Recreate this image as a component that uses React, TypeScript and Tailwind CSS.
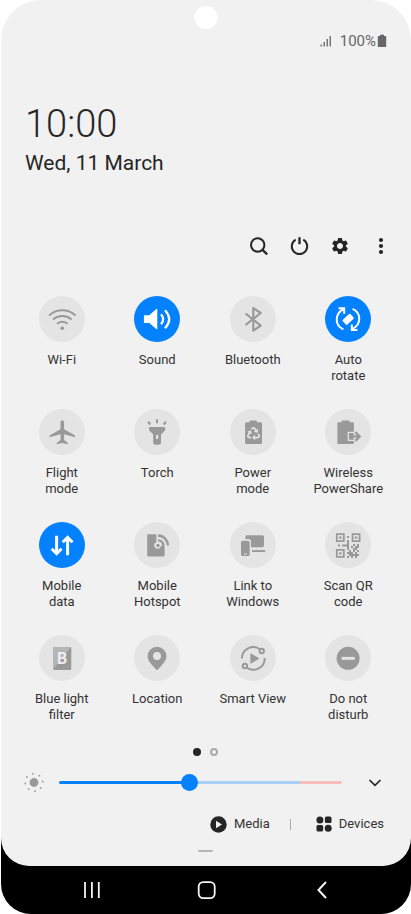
import { useState, type ReactNode } from "react";
import { FaRecycle } from "react-icons/fa";
import { MdSettings } from "react-icons/md";

const LIGHT = "#e4e4e4";

function Glyph({ children }: { children: ReactNode }) {
  return (
    <svg viewBox="0 0 46 46" className="size-full" fill="none" aria-hidden="true">
      {children}
    </svg>
  );
}

const icons: Record<string, ReactNode> = {
  wifi: (
    <Glyph>
      <g stroke="currentColor" strokeWidth="2" strokeLinecap="round">
        <path d="M10.7 19a19.4 19.4 0 0 1 25.2 0" />
        <path d="M14.6 23a14 14 0 0 1 17.4 0" />
        <path d="M18.7 27.3a8 8 0 0 1 9.2 0" />
      </g>
      <circle cx="23.3" cy="32.3" r="1.8" fill="currentColor" />
    </Glyph>
  ),
  sound: (
    <Glyph>
      <path d="M10.6 19.2h4.7l7-6.1q1-.6 1 .4v19.2q0 1-1 .4l-7-6.1h-4.7q-.7 0-.7-.7v-6.4q0-.7.7-.7z" fill="currentColor" />
      <path d="M27 18.2q4.4 5 0 10M31 14.3q8.5 9 0 18" stroke="currentColor" strokeWidth="2.2" />
    </Glyph>
  ),
  bluetooth: (
    <Glyph>
      <path d="M15.5 17.5 30.7 29.6 23.3 34.6V12l7.4 5-15.2 12" stroke="currentColor" strokeWidth="2.2" strokeLinejoin="round" />
    </Glyph>
  ),
  rotate: (
    <Glyph>
      <path d="M18.4 33.4C9.8 29.5 9.2 18.5 18.3 13.2M13.6 12.2h5.6v5.6" stroke="currentColor" strokeWidth="2" />
      <path d="M27.6 12.8c8.600 3.900 9.200 14.900.1 20.200M32.400 34h-5.600v-5.600" stroke="currentColor" strokeWidth="2" />
      <rect x="18" y="20" width="10.400" height="6.600" rx="1" fill="currentColor" transform="rotate(-43 23.200 23.300)" />
    </Glyph>
  ),
  flight: (
    <Glyph>
      <path d="M23.300 11.300c1.200 0 1.800 1.200 1.800 2.700v6.200l10.200 5.800q.7.400.7 1.200v1l-10.900-2.900v5.700l3.300 2.500q.5.400.5 1v.8l-5.600-1.200-5.600 1.200v-.8q0-.6.500-1l3.300-2.500v-5.700l-10.900 2.900v-1q0-.8.7-1.200l10.200-5.800V14c0-1.500.6-2.700 1.800-2.700z" fill="currentColor" />
    </Glyph>
  ),
  torch: (
    <Glyph>
      <path d="M23 10.2v4M14 12.700l2.300 2.800M32 12.700l-2.300 2.800" stroke="currentColor" strokeWidth="2" />
      <path fillRule="evenodd" d="M16 18h14.200q1.100 0 1.100 1v1.200q0 .7-.5 1.200L27 25.600v8q0 2.100-2.100 2.100h-3.600q-2.100 0-2.100-2.100v-8l-3.700-4.200q-.5-.5-.5-1.200V19q0-1 1-1zM22 26v4h2.200v-4z" fill="currentColor" />
    </Glyph>
  ),
  power: (
    <Glyph>
      <path d="M19.700 13.300V12q0-.4.500-.4h6.200q.5 0 .5.4v1.300h3.900q1.200 0 1.200 1.200v19.300q0 1.200-1.200 1.200H16.300q-1.200 0-1.200-1.200V14.500q0-1.200 1.200-1.200z" fill="currentColor" />
      <FaRecycle x="17" y="18" size={13} color={LIGHT} />
    </Glyph>
  ),
  share: (
    <Glyph>
      <path d="M16.500 13.300V12q0-.4.500-.4h7.200q.5 0 .5.4v1.300h3q1.200 0 1.200 1.200v19.300q0 1.200-1.200 1.200H13.600q-1.200 0-1.200-1.200V14.500q0-1.200 1.200-1.200z" fill="currentColor" />
      <path d="M29 23.400h-5.700v8H29" stroke={LIGHT} strokeWidth="1.300" />
      <path d="M28.700 22.800h1v9.200h-1z" fill={LIGHT} />
      <path d="M24.500 27.400h10M30.300 23l4.400 4.400-4.400 4.400" stroke="currentColor" strokeWidth="2.400" />
    </Glyph>
  ),
  data: (
    <Glyph>
      <path d="M17.600 13.800v17.800M12.700 26.800l4.900 4.900 4.900-4.900M28.600 33.200V15.400M23.700 20.300l4.900-4.900 4.900 4.900" stroke="currentColor" strokeWidth="3" />
    </Glyph>
  ),
  hotspot: (
    <Glyph>
      <rect x="13.200" y="12.200" width="17.400" height="22.400" rx="1.300" fill="currentColor" />
      <path d="M22.400 12h8.300v11.600H27a3.400 3.400 0 1 1-4.600-3.400z" fill={LIGHT} />
      <circle cx="24" cy="23.500" r="1.700" fill="currentColor" />
      <path d="M24 18.300a5.400 5.400 0 0 1 5.300 5.400M24 13.500a10 10 0 0 1 9.900 10" stroke="currentColor" strokeWidth="2.300" />
    </Glyph>
  ),
  link: (
    <Glyph>
      <path d="M15.400 17v-2q0-1.800 1.800-1.800h15q1.800 0 1.800 1.800v8.500q0 1.800-1.800 1.800H21v-5.800q0-2.500-2.500-2.500z" fill="currentColor" />
      <path d="M22 28.100h13.100V30H22z" fill="currentColor" />
      <rect x="11" y="18.800" width="8.700" height="15.300" rx="1.800" fill="currentColor" />
      <path d="M14 32.100h2.700" stroke={LIGHT} strokeWidth="1" />
    </Glyph>
  ),
  qr: (
    <Glyph>
      <g stroke="currentColor" strokeWidth="1.800">
        <path d="M11.800 12.100h7v7h-7zM27.600 12.100h7v7h-7zM11.800 27.900h7v7h-7z" />
      </g>
      <path d="M14.100 14.400h2.400v2.400h-2.400zM29.900 14.400h2.400v2.400h-2.400zM14.100 30.200h2.400v2.400h-2.400zM22 14h2v2h-2zM22 18h2v4h-2zM13 22.500h2v2h-2zM17 22.500h5v2h-5zM22 22h2v6h4v-2h-2v-2h2v-2h2v2h2v-2h2v4h-2v2h2v2h-2v2h2v2h-2v2h-2v-2h-2v2h-2v-2h-2v2h-2v-2h2v-2h-2v-2h2v-2h-2zM28 24v2h2v-2zM26 28v2h2v-2zM30 28v2h2v-2zM28 30v2h2v-2z" fill="currentColor" fillRule="evenodd" />
    </Glyph>
  ),
  blue: (
    <Glyph>
      <rect x="14" y="12.100" width="18.300" height="22.900" rx="1.300" fill="currentColor" />
      <path d="M15.300 12.100H32L14 34.500V13.400q0-1.300 1.300-1.300z" fill="#b5b5b5" />
      <text x="23.200" y="28.500" textAnchor="middle" fontSize="16" fontWeight="700" fontFamily="Roboto, sans-serif" fill="#eee">
        B
      </text>
    </Glyph>
  ),
  location: (
    <Glyph>
      <path fillRule="evenodd" d="M23 11.800a9.400 9.400 0 0 1 9.400 9.400c0 5.200-5.200 9.700-9.400 14.100-4.200-4.400-9.400-8.900-9.400-14.100a9.400 9.400 0 0 1 9.400-9.400zM23 17a4 4 0 1 0 0 8 4 4 0 1 0 0-8z" fill="currentColor" />
    </Glyph>
  ),
  smart: (
    <Glyph>
      <g stroke="currentColor" strokeWidth="2">
        <path d="M11.900 23.600A11.400 11.400 0 0 1 30 14.200M34.700 23A11.400 11.400 0 0 1 16.700 32.600" />
        <circle cx="31.700" cy="16" r="2.200" />
        <circle cx="14.900" cy="31" r="2.200" />
      </g>
      <path d="M20.400 18.800q0-.8.700-.4l7.600 4.700q.6.400 0 .8l-7.600 4.700q-.7.400-.7-.4z" fill="currentColor" />
    </Glyph>
  ),
  dnd: (
    <Glyph>
      <circle cx="23.100" cy="23.300" r="11.500" fill="currentColor" />
      <rect x="16.600" y="21.900" width="13.200" height="2.900" fill={LIGHT} />
    </Glyph>
  ),
};

const initialTiles = [
  { icon: "wifi", lines: ["Wi-Fi"], on: false },
  { icon: "sound", lines: ["Sound"], on: true },
  { icon: "bluetooth", lines: ["Bluetooth"], on: false },
  { icon: "rotate", lines: ["Auto", "rotate"], on: true },
  { icon: "flight", lines: ["Flight", "mode"], on: false },
  { icon: "torch", lines: ["Torch"], on: false },
  { icon: "power", lines: ["Power", "mode"], on: false },
  { icon: "share", lines: ["Wireless", "PowerShare"], on: false },
  { icon: "data", lines: ["Mobile", "data"], on: true },
  { icon: "hotspot", lines: ["Mobile", "Hotspot"], on: false },
  { icon: "link", lines: ["Link to", "Windows"], on: false },
  { icon: "qr", lines: ["Scan QR", "code"], on: false },
  { icon: "blue", lines: ["Blue light", "filter"], on: false },
  { icon: "location", lines: ["Location"], on: false },
  { icon: "smart", lines: ["Smart View"], on: false },
  { icon: "dnd", lines: ["Do not", "disturb"], on: false },
];

function StatusBar() {
  return (
    <div className="flex h-4 items-center justify-end pr-6 text-[15px] text-[#666]">
      <svg viewBox="0 0 12 12" className="mr-2 size-3" fill="#777" role="img" aria-label="Signal">
        <path d="M.5 9.500h1.500V11.500H.5zM3.500 7H5v4.500H3.500zM6.500 4H8v7.500H6.500zM9.500 1H11v10.500H9.500z" />
      </svg>
      <span>100%</span>
      <svg viewBox="0 0 10 14" className="ml-px h-3.5 w-2.5" fill="#666" role="img" aria-label="Battery full">
        <path d="M3 .7h4V2h1.400q.8 0 .8.800v9.500q0 .7-.8.700H1.600q-.8 0-.8-.7V2.800q0-.8.800-.8H3z" />
      </svg>
    </div>
  );
}

function Toolbar() {
  const button = "flex size-6 items-center justify-center";
  return (
    <div className="mt-[59px] flex justify-end gap-[17px] pr-[18px] text-[#252525]">
      <button className={button} aria-label="Search">
        <svg viewBox="0 0 24 24" className="size-6" fill="none" stroke="currentColor" strokeWidth="2">
          <circle cx="11.700" cy="11" r="6.700" />
          <path d="m16.500 15.800 4.700 4.500" strokeWidth="2.300" />
        </svg>
      </button>
      <button className={button} aria-label="Power off">
        <svg viewBox="0 0 24 24" className="size-6" fill="none" stroke="currentColor" strokeWidth="2">
          <path d="M8.700 5.700a7.700 7.700 0 1 0 7.600 0" />
          <path d="M12.500 3.200v7" strokeWidth="2.300" />
        </svg>
      </button>
      <button className={button} aria-label="Settings">
        <MdSettings size={20} />
      </button>
      <button className={button} aria-label="More options">
        <svg viewBox="0 0 24 24" className="size-6" fill="currentColor">
          <circle cx="12" cy="6" r="2.100" />
          <circle cx="12" cy="12" r="2.100" />
          <circle cx="12" cy="18" r="2.100" />
        </svg>
      </button>
    </div>
  );
}

function Brightness() {
  const [level, setLevel] = useState(46);
  const fill = `linear-gradient(to right, #0381fe ${level}%, #a8cff8 ${level}%, #a8cff8 85%, #f9bdbd 85%)`;
  return (
    <div className="mt-3.5 flex h-6 items-center pr-6 pl-[21px]">
      <svg viewBox="0 0 24 24" className="size-6 shrink-0" fill="#999" aria-hidden="true">
        <circle cx="12" cy="12.500" r="4.400" />
        <circle cx="11" cy="3.800" r="0.900" />
        <circle cx="17.500" cy="5.700" r="0.900" />
        <circle cx="20.700" cy="11.500" r="0.900" />
        <circle cx="18.700" cy="18" r="0.900" />
        <circle cx="13" cy="21.200" r="0.900" />
        <circle cx="6.700" cy="19.200" r="0.900" />
        <circle cx="3.300" cy="13.500" r="0.900" />
        <circle cx="5" cy="7" r="0.900" />
      </svg>
      <input
        type="range"
        aria-label="Brightness"
        min={0}
        max={100}
        value={level}
        onChange={(e) => setLevel(Number(e.target.value))}
        style={{ backgroundImage: fill }}
        className="ml-[13px] h-[3px] min-w-0 flex-1 appearance-none rounded-full [&::-webkit-slider-thumb]:size-[17px] [&::-webkit-slider-thumb]:appearance-none [&::-webkit-slider-thumb]:rounded-full [&::-webkit-slider-thumb]:bg-[#0381fe]"
      />
      <button className="ml-[21px] size-6 text-[#252525]" aria-label="Brightness settings">
        <svg viewBox="0 0 24 24" className="size-6" fill="none" stroke="currentColor" strokeWidth="1.700">
          <path d="m6.500 10 5.500 5.300 5.500-5.300" />
        </svg>
      </button>
    </div>
  );
}

function Shortcuts() {
  return (
    <div className="mt-[18px] flex h-6 items-center justify-end pr-[27px] text-[13px] text-[#333]">
      <button className="flex items-center gap-[7px]">
        <svg viewBox="0 0 17 17" className="size-[17px]" aria-hidden="true">
          <circle cx="8.500" cy="8.500" r="8.200" fill="#252525" />
          <path d="M6 4.800v7.400l6-3.700z" fill="#f1f1f1" />
        </svg>
        Media
      </button>
      <span className="mr-[25px] ml-5 h-[11px] w-px bg-[#aaa]" />
      <button className="flex items-center gap-[7px]">
        <svg viewBox="0 0 16 16" className="size-4" fill="#252525" aria-hidden="true">
          <circle cx="3.900" cy="3.900" r="3.500" />
          <rect x="8.900" y=".5" width="6.600" height="6.600" rx="1.500" />
          <rect x=".5" y="8.900" width="6.600" height="6.600" rx="1.500" />
          <circle cx="12.200" cy="12.200" r="3.500" />
        </svg>
        Devices
      </button>
    </div>
  );
}

function NavigationBar() {
  return (
    <nav className="-mt-7 flex items-center justify-between rounded-b-[30px] bg-black pt-10 pr-[77px] pb-3 pl-[79px] text-[#f4f4f4]">
      <button className="size-6" aria-label="Recent apps">
        <svg viewBox="0 0 24 24" className="size-6" stroke="currentColor" strokeWidth="1.800">
          <path d="M5 4v16M11.900 4v16M18.800 4v16" />
        </svg>
      </button>
      <button className="size-6" aria-label="Home">
        <svg viewBox="0 0 24 24" className="size-6" fill="none" stroke="currentColor" strokeWidth="1.800">
          <rect x="3.700" y="4.100" width="16" height="16" rx="4.500" />
        </svg>
      </button>
      <button className="size-6" aria-label="Back">
        <svg viewBox="0 0 24 24" className="size-6" fill="none" stroke="currentColor" strokeWidth="2">
          <path d="m16 4-7.500 8L16 20" />
        </svg>
      </button>
    </nav>
  );
}

export default function App() {
  const [tiles, setTiles] = useState(initialTiles);
  const toggle = (index: number) =>
    setTiles(tiles.map((tile, i) => (i === index ? { ...tile, on: !tile.on } : tile)));

  return (
    <div className="bg-white pl-px font-[Roboto,sans-serif]">
      <main className="relative z-10 rounded-t-[40px] rounded-b-[28px] bg-[#f1f1f1] pt-[33px] pb-3.5">
        <span className="absolute top-1.5 left-1/2 size-[23px] -translate-x-1/2 rounded-full bg-white" />
        <StatusBar />
        <header className="mt-[55px] pl-6 text-[#252525]">
          <h1 className="text-[38px] leading-10 font-light">10:00</h1>
          <p className="mt-[7px] text-[21px] leading-6">Wed, 11 March</p>
        </header>
        <Toolbar />
        <section className="mt-[38px] grid grid-cols-4 gap-y-[25px] pr-[15px] pl-[13px]" aria-label="Quick settings">
          {tiles.map((tile, index) => (
            <button
              key={tile.icon}
              aria-pressed={tile.on}
              onClick={() => toggle(index)}
              className="flex min-h-[88px] flex-col items-center text-[13px] leading-4 text-[#333]"
            >
              <span
                className={
                  tile.on
                    ? "mb-2.5 size-[46px] rounded-full bg-[#0381fe] text-white"
                    : "mb-2.5 size-[46px] rounded-full bg-[#e4e4e4] text-[#999]"
                }
              >
                {icons[tile.icon]}
              </span>
              {tile.lines.map((line) => (
                <span key={line}>{line}</span>
              ))}
            </button>
          ))}
        </section>
        <div className="mt-[25px] flex justify-center gap-[9px] pr-0.5">
          <span className="size-2 rounded-full bg-[#252525]" />
          <span className="size-2 rounded-full border-2 border-[#aaa]" />
        </div>
        <Brightness />
        <Shortcuts />
        <div className="mt-3.5 flex justify-center pr-0.5">
          <span className="h-0.5 w-[15px] rounded-full bg-[#b5b5b5]" />
        </div>
      </main>
      <NavigationBar />
    </div>
  );
}
